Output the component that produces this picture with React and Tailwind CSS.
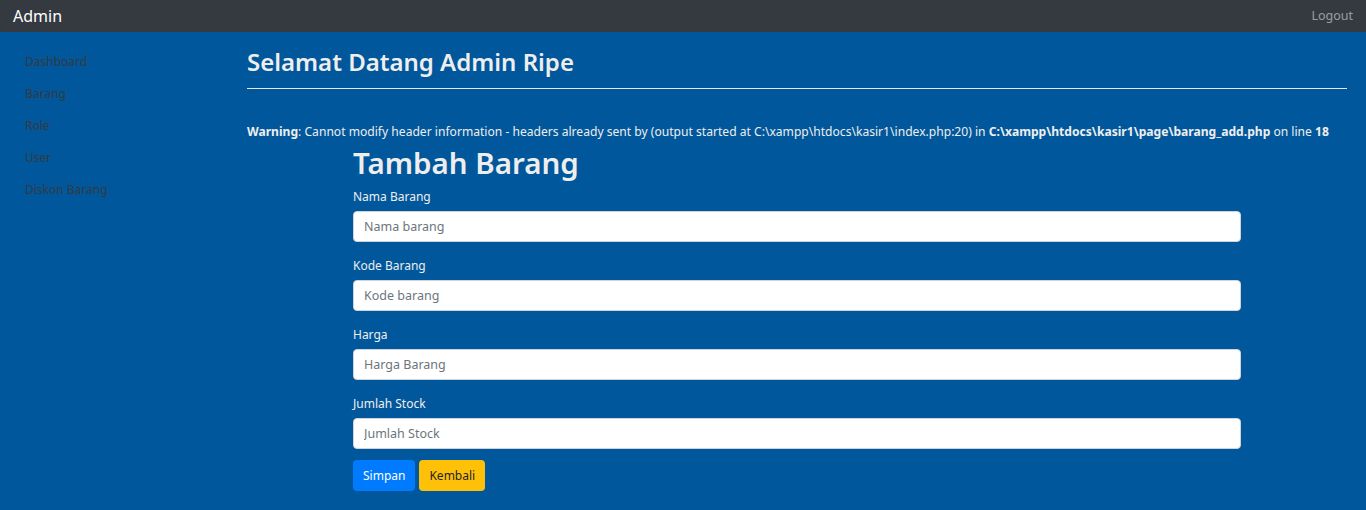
export default function App() {
  const fields = [
    { label: "Nama Barang", placeholder: "Nama barang" },
    { label: "Kode Barang", placeholder: "Kode barang" },
    { label: "Harga", placeholder: "Harga Barang" },
    { label: "Jumlah Stock", placeholder: "Jumlah Stock" },
  ];
  const menu = ["Dashboard", "Barang", "Role", "User", "Diskon Barang"];

  return (
    <div
      className="min-h-[510px] bg-[#01579b] text-[#eeeeee]"
      style={{ fontFamily: '"Noto Sans", "Open Sans", sans-serif' }}
    >
      <nav className="h-8 bg-[#343a40] flex items-center justify-between px-[13px]">
        <span className="text-white text-[16px]">Admin</span>
        <span className="text-[12.5px] text-white/50">Logout</span>
      </nav>

      <div className="flex">
        <aside className="w-[232px] shrink-0 pl-[25px] pt-[22px]">
          <ul className="flex flex-col">
            {menu.map((m) => (
              <li key={m} className="h-8 text-[12px] text-[#343a40] leading-[16px]">
                {m}
              </li>
            ))}
          </ul>
        </aside>

        <main className="flex-1 pl-[15px] pr-[19px] pt-[15px]">
          <h2 className="text-[24px] font-semibold leading-[30px] pb-[11px]">Selamat Datang Admin Ripe</h2>
          <hr className="border-t border-[#e8e8e8]" />
          <p className="text-[12.1px] mt-[34px] leading-[18px]">
            <b>Warning</b>: Cannot modify header information - headers already sent by (output started at C:\xampp\htdocs\kasir1\index.php:20) in <b>C:\xampp\htdocs\kasir1\page\barang_add.php</b> on line <b>18</b>
          </p>

          <div className="w-[888px] mx-auto flex flex-col">
            <h1 className="text-[29.5px] font-semibold leading-[36px] mt-[4px] mb-[7px]">Tambah Barang</h1>
            <div className="flex flex-col gap-[15px]">
              {fields.map((f) => (
                <div key={f.label}>
                  <label className="block text-[12px] leading-[18px] mb-[5px]">{f.label}</label>
                  <input
                    className="w-full h-[31px] bg-white rounded-[4px] border border-[#ced4da] px-[10px] text-[12.5px] text-[#495057] placeholder:text-[#6c757d] outline-none"
                    placeholder={f.placeholder}
                  />
                </div>
              ))}
            </div>
            <div className="flex gap-[4px] mt-[11px]">
              <button className="h-[31px] px-[10px] rounded-[4px] bg-[#007bff] text-white text-[12px]">Simpan</button>
              <button className="h-[31px] px-[10px] rounded-[4px] bg-[#ffc107] text-[#212529] text-[12px]">Kembali</button>
            </div>
          </div>
        </main>
      </div>
    </div>
  );
}
